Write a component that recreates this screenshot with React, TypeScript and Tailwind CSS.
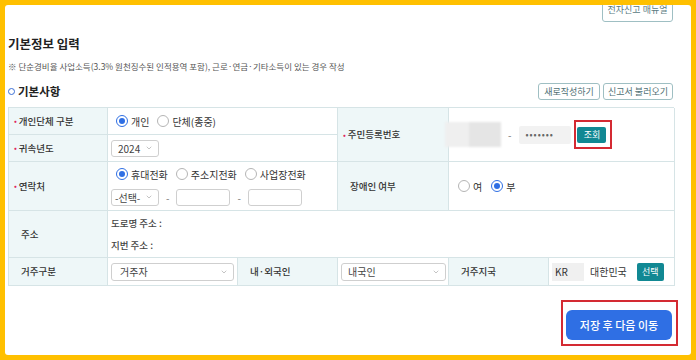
import { ChevronDown } from "lucide-react";

const font = { fontFamily: '"Noto Sans CJK KR", "Noto Sans", sans-serif' };

function Radio({ checked, label }: { checked?: boolean; label: string }) {
    return (
        <label className="flex items-center gap-[3px] text-[10px] text-[#333]">
            <span
                className={`flex h-[12px] w-[12px] items-center justify-center rounded-full border bg-white ${
                    checked ? "border-[#2f6fe4]" : "border-[#b5b5b5]"
                }`}
            >
                {checked && <span className="h-[6px] w-[6px] rounded-full bg-[#2f6fe4]" />}
            </span>
            {label}
        </label>
    );
}

function Select({ value, className }: { value: string; className: string }) {
    return (
        <div
            className={`flex items-center justify-between rounded-[3px] border border-[#cfcfcf] bg-white pl-[6px] pr-[5px] text-[10px] text-[#444] ${className}`}
        >
            <span>{value}</span>
            <ChevronDown size={8} strokeWidth={1.5} className="text-[#888]" />
        </div>
    );
}

function Label({ text, req, className = "" }: { text: string; req?: boolean; className?: string }) {
    return (
        <div
            className={`flex items-center border-b border-r border-[#d6e4e6] bg-[#eef7f8] text-[9.5px] font-medium text-[#333] ${
                req ? "pl-[5px]" : "pl-[12px]"
            } ${className}`}
        >
            {req && <span className="mr-[2px] text-[8px] text-[#e0245e]">•</span>}
            {text}
        </div>
    );
}

const cell = "border-b border-r border-[#d6e4e6] bg-white";

export default function App() {
    return (
        <div className="h-[360px] w-[696px] bg-[#ffc000] p-[5px]" style={font}>
            <div className="flex h-[350px] flex-col overflow-hidden rounded-[3px] bg-white pl-[3px]">
                {/* top manual button (cut by frame) */}
                <div className="flex h-[17px] justify-end pr-[18px]">
                    <button className="-mt-[7px] h-[24px] w-[71px] rounded-[3px] border border-[#9fbfc3] text-[9px] text-[#5a7a7f]">
                        전자신고 매뉴얼
                    </button>
                </div>

                <h1 className="mt-[12px] h-[20px] text-[12.5px] font-bold leading-[20px] text-[#222]">기본정보 입력</h1>
                <p className="mt-[5px] text-[8.5px] leading-[14px] text-[#555]">
                    ※ 단순경비율 사업소득(3.3% 원천징수된 인적용역 포함), 근로·연금·기타소득이 있는 경우 작성
                </p>

                <div className="mt-[10px] flex h-[17px] items-center justify-between pr-[18px]">
                    <div className="flex items-center gap-[3px]">
                        <span className="h-[7px] w-[7px] rounded-full border-[1.5px] border-[#3b6fd6]" />
                        <span className="text-[11.5px] font-bold text-[#222]">기본사항</span>
                    </div>
                    <div className="flex gap-[3px]">
                        <button className="h-[17px] w-[62px] rounded-[3px] border border-[#9fbfc3] text-[9px] text-[#4f6f74]">
                            새로작성하기
                        </button>
                        <button className="h-[17px] w-[70px] rounded-[3px] border border-[#9fbfc3] text-[9px] text-[#4f6f74]">
                            신고서 불러오기
                        </button>
                    </div>
                </div>

                {/* form table */}
                <div className="mt-[7px] grid w-[666px] grid-cols-[99px_130px_100px_111px_100px_126px] grid-rows-[27px_27px_49px_47px_28px] border-l border-t border-[#d6e4e6]">
                    <Label text="개인단체 구분" req />
                    <div className={`${cell} col-span-2 flex items-center gap-[8px] pl-[8px]`}>
                        <Radio checked label="개인" />
                        <Radio label="단체(종중)" />
                    </div>
                    <Label text="주민등록번호" req className="row-span-2" />
                    <div className={`${cell} col-span-2 row-span-2 flex items-center`}>
                        <div className="-ml-[4px] flex h-[25px] w-[56px] blur-[1px]">
                            <div className="w-[24px] bg-[#efefef]" />
                            <div className="w-[32px] bg-[#e5e5e5]" />
                        </div>
                        <span className="ml-[7px] text-[10px] text-[#777]">-</span>
                        <div className="ml-[8px] flex h-[18px] w-[52px] items-center rounded-[2px] bg-[#f2f2f2] pl-[6px] text-[9px] tracking-[1px] text-[#666]">
                            •••••••
                        </div>
                        <div className="ml-[3px] flex h-[29px] items-center border-2 border-[#d42a32] pl-[1px] pr-[4px]">
                            <button className="h-[16px] w-[29px] rounded-[2px] bg-[#118893] text-[9px] text-white">조회</button>
                        </div>
                    </div>

                    <Label text="귀속년도" req />
                    <div className={`${cell} col-span-2 flex items-center pl-[3px]`}>
                        <Select value="2024" className="h-[17px] w-[48px]" />
                    </div>

                    <Label text="연락처" req />
                    <div className={`${cell} col-span-2 flex flex-col justify-center gap-[7px] pl-[3px]`}>
                        <div className="flex items-center gap-[8px] pl-[5px]">
                            <Radio checked label="휴대전화" />
                            <Radio label="주소지전화" />
                            <Radio label="사업장전화" />
                        </div>
                        <div className="flex items-center text-[10px] text-[#777]">
                            <Select value="-선택-" className="h-[17px] w-[48px] !pl-[3px]" />
                            <span className="mx-[7px]">-</span>
                            <div className="h-[17px] w-[54px] rounded-[3px] border border-[#cfcfcf]" />
                            <span className="mx-[7px]">-</span>
                            <div className="h-[17px] w-[54px] rounded-[3px] border border-[#cfcfcf]" />
                        </div>
                    </div>
                    <Label text="장애인 여부" />
                    <div className={`${cell} col-span-2 flex items-center gap-[9px] pl-[9px]`}>
                        <Radio label="여" />
                        <Radio checked label="부" />
                    </div>

                    <Label text="주소" />
                    <div className={`${cell} col-span-5 flex flex-col justify-center gap-[8px] pl-[3px] text-[9.5px] font-medium leading-[14px] text-[#444]`}>
                        <span>도로명 주소 :</span>
                        <span>지번 주소 :</span>
                    </div>

                    <Label text="거주구분" />
                    <div className={`${cell} flex items-center pl-[3px]`}>
                        <Select value="거주자" className="h-[18px] w-[123px] !pl-[8px]" />
                    </div>
                    <Label text="내·외국인" />
                    <div className={`${cell} flex items-center pl-[3px]`}>
                        <Select value="내국인" className="h-[18px] w-[105px]" />
                    </div>
                    <Label text="거주지국" />
                    <div className={`${cell} flex items-center pl-[3px] text-[10px] text-[#333]`}>
                        <div className="flex h-[18px] w-[32px] items-center bg-[#f0f0f0] pl-[3px]">KR</div>
                        <span className="ml-[6px]">대한민국</span>
                        <button className="ml-[10px] h-[18px] w-[27px] rounded-[2px] bg-[#118893] text-[9px] text-white">선택</button>
                    </div>
                </div>

                <div className="mt-[14px] flex justify-end pr-[13px]">
                    <div className="border-2 border-[#d42a32] pb-[4px] pl-[3px] pr-[4px] pt-[8px]">
                        <button className="h-[30px] w-[106px] rounded-[6px] bg-[#2f6fe4] text-[11px] font-medium text-white">
                            저장 후 다음 이동
                        </button>
                    </div>
                </div>
            </div>
        </div>
    );
}
